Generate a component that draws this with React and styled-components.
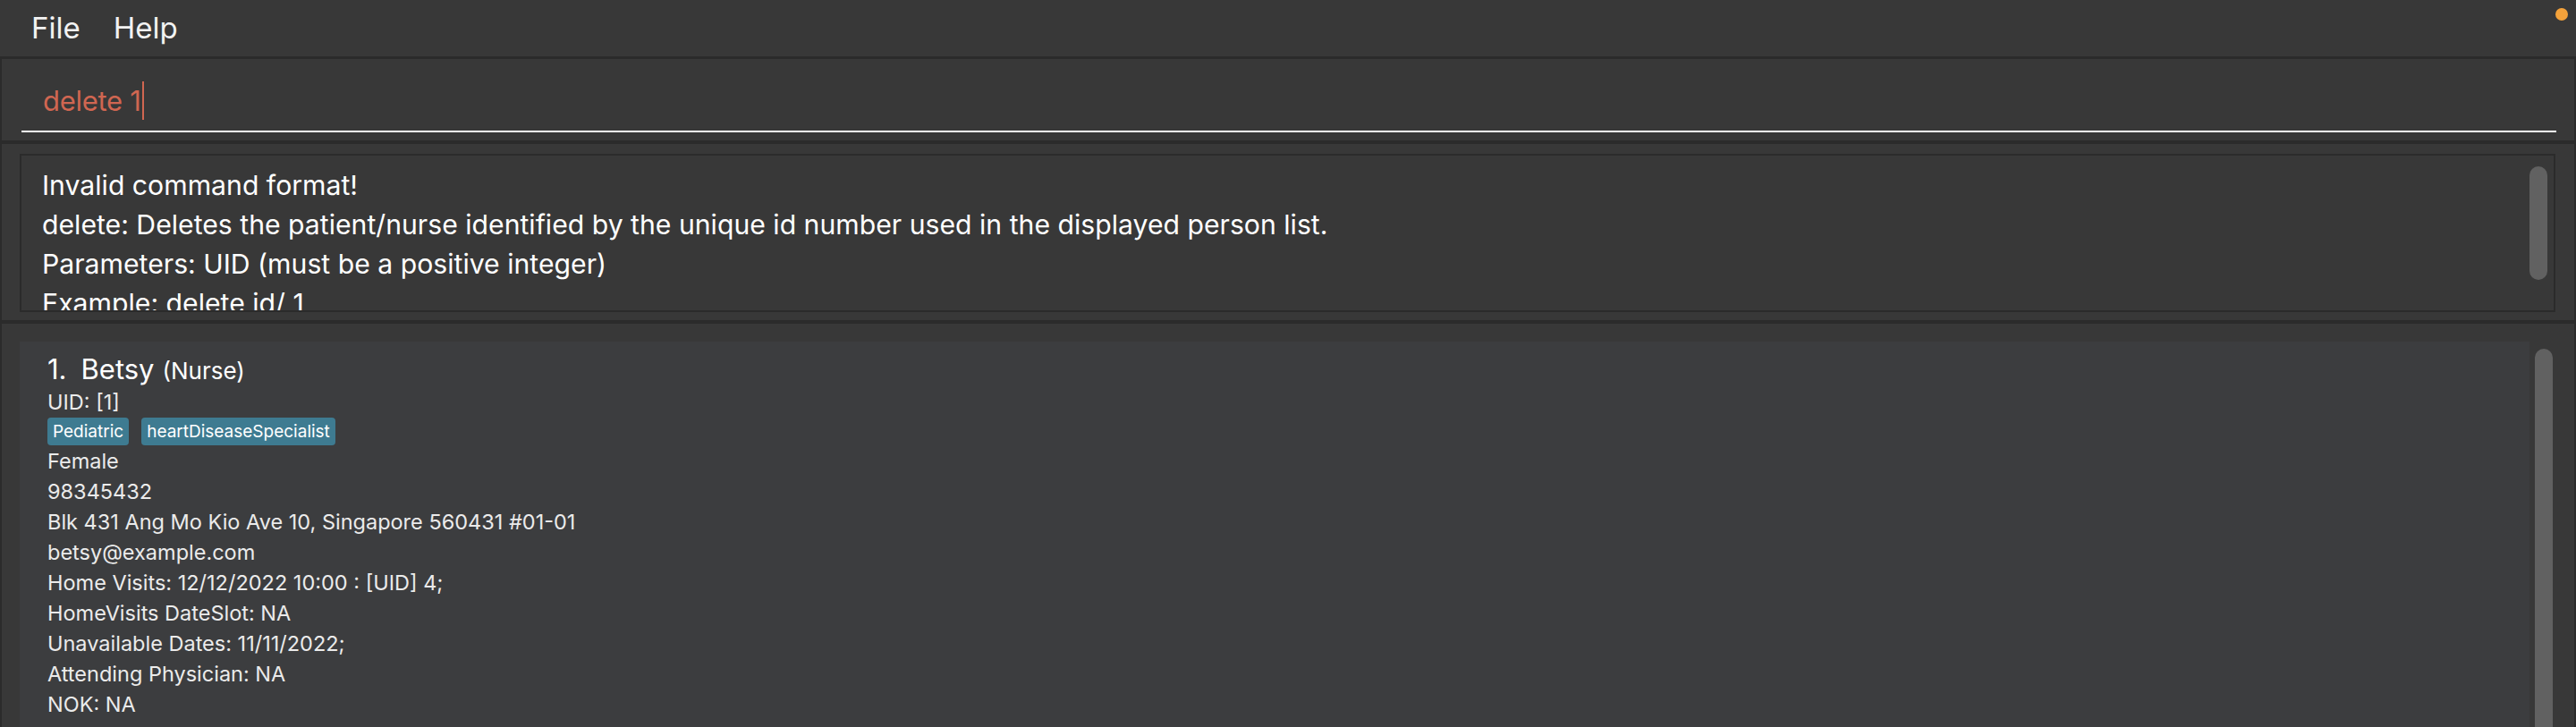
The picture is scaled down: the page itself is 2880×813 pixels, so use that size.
import React from "react";
import styled, { createGlobalStyle } from "styled-components";

const GlobalStyle = createGlobalStyle`
  *, *::before, *::after {
    box-sizing: border-box;
  }
  html, body {
    margin: 0;
    padding: 0;
    background: #383838;
    overflow: hidden;
  }
  body {
    font-family: Inter, "Noto Sans", sans-serif;
  }
`;

const Window = styled.div`
  height: 813px;
  display: flex;
  flex-direction: column;
  background: #383838;
`;

const MenuBar = styled.nav`
  height: 64px;
  flex: none;
  display: flex;
  align-items: center;
  gap: 37px;
  padding-left: 35px;
  border-bottom: 1px solid #2b2b2b;
`;

const MenuItem = styled.span`
  font-size: 33px;
  line-height: 1;
  color: #f2f2f2;
`;

const StatusDot = styled.span`
  margin-left: auto;
  align-self: flex-start;
  margin-top: 9px;
  margin-right: 9px;
  width: 14px;
  height: 14px;
  border-radius: 50%;
  background: #f4a23b;
`;

const Pane = styled.section`
  flex: none;
  border: 2px solid #2b2b2b;
`;

const CommandPane = styled(Pane)`
  height: 95px;
  display: flex;
  align-items: flex-end;
  padding: 0 20px 9px 22px;
`;

const CommandField = styled.div`
  flex: 1;
  padding: 0 0 11px 24px;
  border-bottom: 2px solid #ffffff;
  font-size: 31px;
  line-height: 44px;
  letter-spacing: -0.3px;
  color: #d06651;
  white-space: pre;
`;

const Caret = styled.span`
  display: inline-block;
  vertical-align: top;
  width: 2px;
  height: 43px;
  margin-left: 2px;
  background: #d06651;
`;

const ResultPane = styled(Pane)`
  height: 201px;
  display: flex;
  padding: 11px 21px 9px 20px;
`;

const ResultBox = styled.div`
  flex: 1;
  display: flex;
  border: 2px solid #2b2b2b;
  overflow: hidden;
`;

const ResultText = styled.div`
  flex: 1;
  padding: 11px 23px 0;
  font-size: 30.2px;
  line-height: 44px;
  color: #ffffff;
  overflow: hidden;
  white-space: nowrap;
`;

const Thumb = styled.div`
  flex: none;
  width: 20px;
  border-radius: 10px;
  background: #616161;
  align-self: ${(p) => (p.$stretch ? "stretch" : "flex-start")};
  height: ${(p) => (p.$stretch ? "auto" : "127px")};
  margin: ${(p) => (p.$stretch ? "8px 0 0 0" : "12px 7px 0 0")};
  border-bottom-left-radius: ${(p) => (p.$stretch ? 0 : "10px")};
  border-bottom-right-radius: ${(p) => (p.$stretch ? 0 : "10px")};
`;

const ListPane = styled(Pane)`
  flex: 1;
  min-height: 0;
  border-bottom: none;
  display: flex;
  gap: 6px;
  padding: 20px 24px 0 20px;
  overflow: hidden;
`;

const PersonList = styled.div`
  flex: 1;
  min-width: 0;
`;

const Card = styled.div`
  background: #3c3d3f;
  padding: 11px 31px 20px;
`;

const NameRow = styled.div`
  display: flex;
  align-items: baseline;
  height: 40px;
  line-height: 40px;
  color: #ffffff;
`;

const Index = styled.span`
  font-size: 31px;
  margin-right: 16px;
`;

const Name = styled.span`
  font-size: 31px;
  margin-right: 9px;
`;

const Role = styled.span`
  font-size: 26px;
`;

const Detail = styled.div`
  font-size: 23.5px;
  line-height: 34px;
  color: #ebebeb;
  white-space: nowrap;
`;

const TagRow = styled.div`
  display: flex;
  gap: 14px;
  height: 32px;
  align-items: flex-start;
`;

const Tag = styled.span`
  height: 31px;
  line-height: 31px;
  padding: 0 6px;
  font-size: 19px;
  color: #ffffff;
  background: #3e7b91;
  border-radius: 4px;
`;

const resultLines = [
  "Invalid command format!",
  "delete: Deletes the patient/nurse identified by the unique id number used in the displayed person list.",
  "Parameters: UID (must be a positive integer)",
  "Example: delete id/ 1",
];

const person = {
  uid: "UID: [1]",
  tags: ["Pediatric", "heartDiseaseSpecialist"],
  details: [
    "Female",
    "98345432",
    "Blk 431 Ang Mo Kio Ave 10, Singapore 560431 #01-01",
    "betsy@example.com",
    "Home Visits: 12/12/2022 10:00 : [UID] 4;",
    "HomeVisits DateSlot: NA",
    "Unavailable Dates: 11/11/2022;",
    "Attending Physician: NA",
    "NOK: NA",
  ],
};

const App = () => {
  return (
    <Window>
      <GlobalStyle />
      <MenuBar>
        <MenuItem>File</MenuItem>
        <MenuItem>Help</MenuItem>
        <StatusDot />
      </MenuBar>

      <CommandPane>
        <CommandField>
          delete 1<Caret />
        </CommandField>
      </CommandPane>

      <ResultPane>
        <ResultBox>
          <ResultText>
            {resultLines.map((line) => (
              <div key={line}>{line}</div>
            ))}
          </ResultText>
          <Thumb />
        </ResultBox>
      </ResultPane>

      <ListPane>
        <PersonList>
          <Card>
            <NameRow>
              <Index>1.</Index>
              <Name>Betsy</Name>
              <Role>(Nurse)</Role>
            </NameRow>
            <Detail>{person.uid}</Detail>
            <TagRow>
              {person.tags.map((t) => (
                <Tag key={t}>{t}</Tag>
              ))}
            </TagRow>
            {person.details.map((d) => (
              <Detail key={d}>{d}</Detail>
            ))}
          </Card>
        </PersonList>
        <Thumb $stretch />
      </ListPane>
    </Window>
  );
};

export default App;
